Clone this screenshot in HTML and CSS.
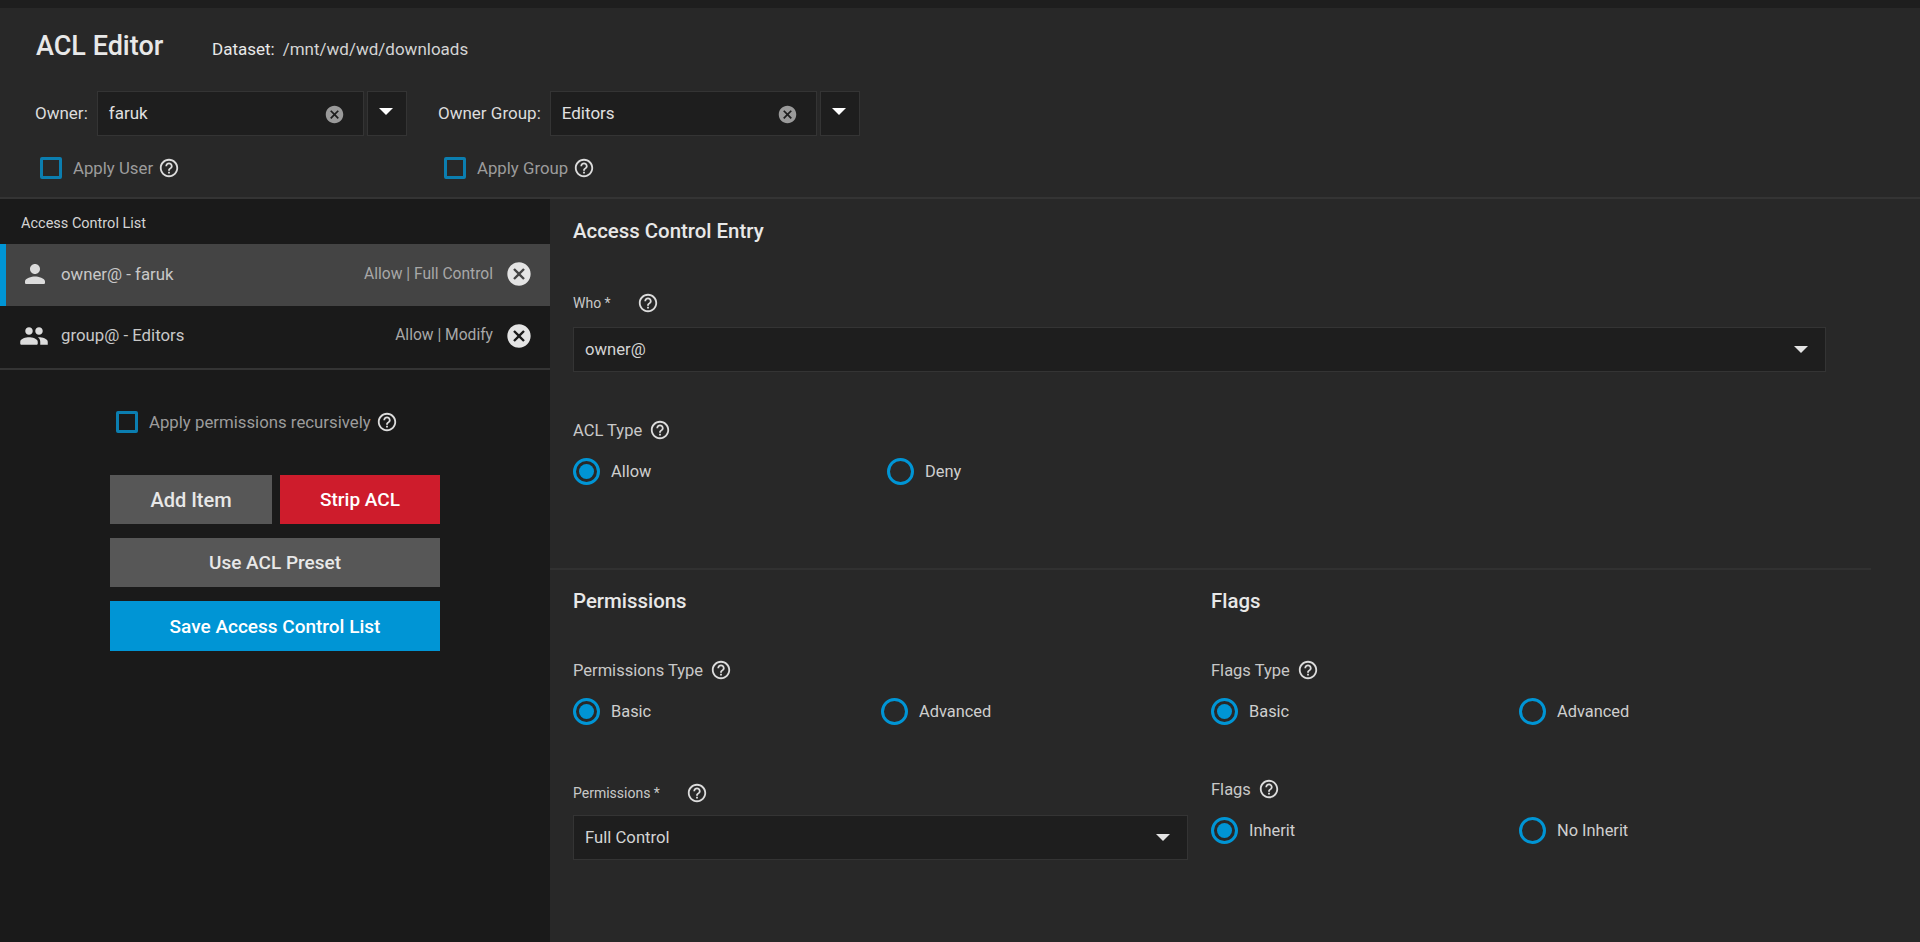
FILE: index.html
```html
<!DOCTYPE html>
<html lang="en">
<head>
<meta charset="utf-8">
<title>ACL Editor</title>
<link rel="stylesheet" href="styles.css">
</head>
<body>
<svg class="defs" width="0" height="0" aria-hidden="true">
  <symbol id="i-help" viewBox="0 0 24 24"><path d="M11 18h2v-2h-2v2zm1-16C6.48 2 2 6.48 2 12s4.48 10 10 10 10-4.48 10-10S17.52 2 12 2zm0 18c-4.41 0-8-3.59-8-8s3.59-8 8-8 8 3.59 8 8-3.59 8-8 8zm0-14c-2.21 0-4 1.79-4 4h2c0-1.1.9-2 2-2s2 .9 2 2c0 2-3 1.75-3 5h2c0-2.25 3-2.5 3-5 0-2.21-1.79-4-4-4z"/></symbol>
  <symbol id="i-cancel" viewBox="0 0 24 24"><path d="M12 2C6.47 2 2 6.47 2 12s4.47 10 10 10 10-4.47 10-10S17.53 2 12 2zm5 13.59L15.59 17 12 13.41 8.41 17 7 15.59 10.59 12 7 8.41 8.41 7 12 10.59 15.59 7 17 8.41 13.41 12 17 15.59z"/></symbol>
  <symbol id="i-person" viewBox="0 0 24 24"><path d="M12 12c2.21 0 4-1.79 4-4s-1.79-4-4-4-4 1.79-4 4 1.79 4 4 4zm0 2c-2.67 0-8 1.34-8 4v1c0 .55.45 1 1 1h14c.55 0 1-.45 1-1v-1c0-2.66-5.33-4-8-4z"/></symbol>
  <symbol id="i-group" viewBox="0 0 24 24"><path d="M16 11c1.66 0 2.99-1.34 2.99-3S17.66 5 16 5c-1.66 0-3 1.34-3 3s1.34 3 3 3zm-8 0c1.66 0 2.99-1.34 2.99-3S9.66 5 8 5C6.34 5 5 6.34 5 8s1.34 3 3 3zm0 2c-2.33 0-7 1.17-7 3.5V18c0 .55.45 1 1 1h12c.55 0 1-.45 1-1v-1.5c0-2.33-4.67-3.5-7-3.5zm8 0c-.29 0-.62.02-.97.05 1.16.84 1.97 1.97 1.97 3.45V19h6v-2.5c0-2.33-4.67-3.5-7-3.5z"/></symbol>
</svg>

<div class="topbar"></div>

<header class="header">
  <div class="title-row">
    <h1 class="title">ACL Editor</h1>
    <div class="dataset"><span class="dataset-label">Dataset:</span><span>/mnt/wd/wd/downloads</span></div>
  </div>
  <div class="owner-row">
    <div class="owner-field owner-user">
      <span class="owner-label">Owner:</span>
      <div class="combo"><span>faruk</span><svg class="clear"><use href="#i-cancel"/></svg></div>
      <div class="combo-btn"><i class="arrow arrow-lg"></i></div>
    </div>
    <div class="owner-field">
      <span class="owner-label">Owner Group:</span>
      <div class="combo"><span>Editors</span><svg class="clear"><use href="#i-cancel"/></svg></div>
      <div class="combo-btn"><i class="arrow arrow-lg"></i></div>
    </div>
  </div>
  <div class="apply-row">
    <label class="check check-user"><i class="box"></i><span>Apply User</span><svg class="help"><use href="#i-help"/></svg></label>
    <label class="check"><i class="box"></i><span>Apply Group</span><svg class="help"><use href="#i-help"/></svg></label>
  </div>
</header>

<main class="main">
  <aside class="left">
    <div class="list-title">Access Control List</div>
    <div class="ace selected">
      <svg class="ace-icon person"><use href="#i-person"/></svg>
      <span class="ace-who">owner@ - faruk</span>
      <span class="ace-perm">Allow | Full Control</span>
      <svg class="ace-del"><use href="#i-cancel"/></svg>
    </div>
    <div class="ace last">
      <svg class="ace-icon group"><use href="#i-group"/></svg>
      <span class="ace-who">group@ - Editors</span>
      <span class="ace-perm">Allow | Modify</span>
      <svg class="ace-del"><use href="#i-cancel"/></svg>
    </div>
    <label class="check recursive"><i class="box"></i><span>Apply permissions recursively</span><svg class="help"><use href="#i-help"/></svg></label>
    <div class="actions">
      <button class="btn btn-grey btn-add">Add Item</button>
      <button class="btn btn-red btn-strip">Strip ACL</button>
      <button class="btn btn-grey btn-wide">Use ACL Preset</button>
      <button class="btn btn-blue btn-wide">Save Access Control List</button>
    </div>
  </aside>

  <section class="right">
    <div class="entry">
      <h2 class="section-title">Access Control Entry</h2>
      <div class="small-label who-label"><span class="small-text">Who *</span><svg class="help"><use href="#i-help"/></svg></div>
      <div class="select"><span>owner@</span><i class="arrow"></i></div>
      <div class="field-label acl-label"><span>ACL Type</span><svg class="help"><use href="#i-help"/></svg></div>
      <div class="radios acl-radios">
        <div class="radio on"><i class="ring"></i><span>Allow</span></div>
        <div class="radio"><i class="ring"></i><span>Deny</span></div>
      </div>
    </div>
    <div class="columns">
      <div class="col col-perm">
        <h2 class="section-title">Permissions</h2>
        <div class="field-label type-label"><span>Permissions Type</span><svg class="help"><use href="#i-help"/></svg></div>
        <div class="radios">
          <div class="radio on"><i class="ring"></i><span>Basic</span></div>
          <div class="radio"><i class="ring"></i><span>Advanced</span></div>
        </div>
        <div class="small-label perm-label"><span class="small-text">Permissions *</span><svg class="help"><use href="#i-help"/></svg></div>
        <div class="select"><span>Full Control</span><i class="arrow"></i></div>
      </div>
      <div class="col col-flags">
        <h2 class="section-title">Flags</h2>
        <div class="field-label type-label"><span>Flags Type</span><svg class="help"><use href="#i-help"/></svg></div>
        <div class="radios">
          <div class="radio on"><i class="ring"></i><span>Basic</span></div>
          <div class="radio"><i class="ring"></i><span>Advanced</span></div>
        </div>
        <div class="field-label flags-label"><span>Flags</span><svg class="help"><use href="#i-help"/></svg></div>
        <div class="radios">
          <div class="radio on"><i class="ring"></i><span>Inherit</span></div>
          <div class="radio"><i class="ring"></i><span>No Inherit</span></div>
        </div>
      </div>
    </div>
  </section>
</main>
</body>
</html>
```

FILE: styles.css
```css
* { box-sizing: border-box; }
html, body { height: 100%; }
body {
  margin: 0;
  height: 942px;
  overflow: hidden;
  display: flex;
  flex-direction: column;
  background: #282828;
  color: #d4d4d4;
  font-family: Roboto, "Liberation Sans", sans-serif;
  font-size: 16px;
}
.defs { position: absolute; }
svg { fill: currentColor; display: block; flex: none; }

.topbar { height: 8px; background: #1e1e1e; flex: none; }

.header {
  flex: none;
  height: 191px;
  background: #282828;
  border-bottom: 2px solid #343434;
}
.title-row {
  display: flex;
  align-items: baseline;
  padding: 20px 0 0 36px;
  height: 82px;
}
.title {
  margin: 0;
  font-size: 27px;
  line-height: 36px;
  font-weight: 500;
  color: #e8e8e8;
  width: 176px;
}
.dataset { font-size: 17px; color: #d4d4d4; }
.dataset-label { margin-right: 8px; color: #e8e8e8; }

.owner-row { display: flex; padding-left: 35px; height: 46px; align-items: flex-start; }
.owner-field { display: flex; align-items: center; height: 46px; }
.owner-user { width: 403px; }
.owner-label { font-size: 17px; color: #dcdcdc; margin-right: 9px; white-space: nowrap; }
.combo {
  width: 267px;
  height: 45px;
  background: #1e1e1e;
  border: 1px solid #343434;
  display: flex;
  align-items: center;
  justify-content: space-between;
  padding: 0 18px 0 11px;
  color: #e0e0e0;
  font-size: 17px;
}
.clear { width: 21px; height: 21px; color: #9a9a9a; margin-top: 2px; }
.combo-btn {
  width: 40px;
  height: 45px;
  margin-left: 3px;
  background: #1e1e1e;
  border: 1px solid #343434;
  display: flex;
  align-items: center;
  justify-content: center;
  padding: 0 2px 3px 0;
}

.arrow {
  display: block;
  width: 0;
  height: 0;
  border-left: 7px solid transparent;
  border-right: 7px solid transparent;
  border-top: 7px solid #e4e4e4;
}
.arrow-lg { border-top-color: #fff; }

.apply-row { display: flex; padding-left: 40px; margin-top: 20px; }
.check-user { width: 404px; }
.check { display: flex; align-items: center; height: 24px; color: #9c9c9c; font-size: 16.8px; }
.box {
  display: block;
  width: 22px;
  height: 22px;
  border: 3px solid #0b7eb0;
  border-radius: 2px;
  margin-right: 11px;
}
.check .help { margin-left: 5px; }

.help { width: 22px; height: 22px; color: #dcdcdc; }

.main { flex: 1; display: flex; min-height: 0; }

.left { width: 550px; flex: none; background: #1a1a1a; }
.list-title { height: 45px; padding: 15px 0 0 21px; font-size: 14.5px; line-height: 20px; color: #d4d4d4; }
.ace {
  height: 62px;
  display: flex;
  align-items: center;
  padding: 0 17px 2px 20px;
  font-size: 16.8px;
  color: #c8c8c8;
}
.ace.selected {
  background: #444;
  border-left: 6px solid #0095d5;
  padding-left: 14px;
}
.ace.last { height: 64px; padding-bottom: 3px; border-bottom: 2px solid #343434; }
.ace-icon { width: 30px; height: 30px; color: #dcdcdc; }
.ace-icon.group { margin: 0 1px 0 -1px; }
.ace-who { margin: 0 0 1px 11px; flex: 1; }
.ace-perm { font-size: 15.6px; color: #a8a8a8; margin: 0 12px 1px 0; }
.ace-del { width: 28px; height: 28px; color: #e4e4e4; }

.recursive { margin: 40px 0 0 116px; }

.actions {
  margin: 41px 0 0 110px;
  width: 330px;
  display: grid;
  grid-template-columns: 162px 160px;
  column-gap: 8px;
  row-gap: 14px;
}
.btn {
  height: 49px;
  border: 0;
  font-family: inherit;
  font-size: 19px;
  font-weight: 500;
  color: #e8e8e8;
}
.btn-wide { grid-column: 1 / -1; }
.btn-wide:last-child { height: 50px; }
.btn-add { font-size: 20px; }
.btn-grey { background: #575757; }
.btn-red { background: #ce1c2c; color: #fff; }
.btn-blue { background: #0095d5; color: #fff; }

.right { flex: 1; min-width: 0; padding-right: 49px; }
.entry { height: 371px; border-bottom: 2px solid #313131; padding: 18px 0 0 23px; }
.section-title { margin: 0; font-size: 20.4px; line-height: 28px; font-weight: 500; color: #e8e8e8; }
.small-label { display: flex; align-items: center; height: 24px; }
.small-text { font-size: 14px; color: #c8c8c8; }
.who-label { margin-top: 46px; }
.who-label .help { margin-left: 26px; }
.select {
  height: 45px;
  margin-top: 12px;
  margin-right: 45px;
  background: #1e1e1e;
  border: 1px solid #343434;
  display: flex;
  align-items: center;
  justify-content: space-between;
  padding: 0 17px 0 11px;
  color: #d4d4d4;
  font-size: 16.7px;
}
.field-label { display: flex; align-items: center; height: 24px; color: #c8c8c8; font-size: 16.5px; }
.field-label .help { margin-left: 7px; }
.acl-label { margin-top: 46px; }
.radios { display: grid; grid-template-columns: 308px 1fr; margin-top: 15px; }
.acl-radios { grid-template-columns: 314px 1fr; }
.radio { display: flex; align-items: center; height: 28px; color: #cfcfcf; font-size: 16.4px; }
.ring {
  display: block;
  position: relative;
  width: 27px;
  height: 27px;
  border: 3px solid #0095d5;
  border-radius: 50%;
  margin-right: 11px;
}
.radio.on .ring::after {
  content: "";
  position: absolute;
  left: 3px;
  top: 3px;
  width: 15px;
  height: 15px;
  border-radius: 50%;
  background: #0095d5;
}
.columns { display: flex; padding-left: 23px; }
.columns .section-title { margin-top: 17px; }
.col-perm { width: 615px; flex: none; margin-right: 23px; }
.col-perm .select { margin-right: 0; margin-top: 10px; }
.col-flags { flex: 1; }
.type-label { margin-top: 43px; }
.perm-label { margin-top: 56px; }
.perm-label .help { margin-left: 26px; }
.flags-label { margin-top: 52px; }
```
